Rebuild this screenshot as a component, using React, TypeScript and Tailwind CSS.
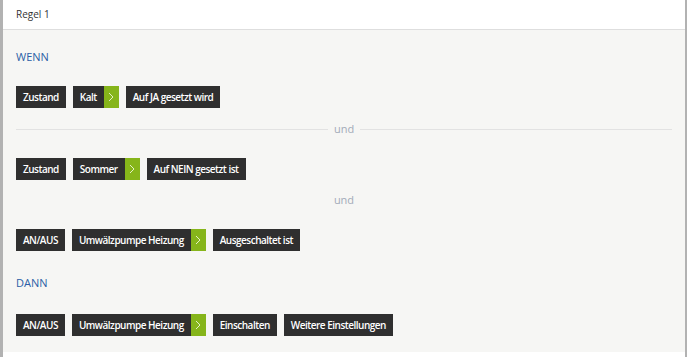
import React from 'react';

type ChipDef = { label: string; arrow?: boolean };

const rows: ChipDef[][] = [
  [{ label: 'Zustand' }, { label: 'Kalt', arrow: true }, { label: 'Auf JA gesetzt wird' }],
  [{ label: 'Zustand' }, { label: 'Sommer', arrow: true }, { label: 'Auf NEIN gesetzt ist' }],
  [{ label: 'AN/AUS' }, { label: 'Umwälzpumpe Heizung', arrow: true }, { label: 'Ausgeschaltet ist' }],
  [
    { label: 'AN/AUS' },
    { label: 'Umwälzpumpe Heizung', arrow: true },
    { label: 'Einschalten' },
    { label: 'Weitere Einstellungen' },
  ],
];

function Chip({ label, arrow }: ChipDef) {
  return (
    <div className="flex h-[22px] items-stretch bg-[#2f2f2f]">
      <span className="flex items-center px-[7px] text-[10px] font-semibold tracking-[-0.5px] text-white">
        {label}
      </span>
      {arrow && (
        <span className="flex w-[15px] items-center justify-center bg-[#86b51a]">
          <svg width="6" height="10" viewBox="0 0 6 10" fill="none">
            <path d="M1 1l4 4-4 4" stroke="#e4f0c4" strokeWidth="1" />
          </svg>
        </span>
      )}
    </div>
  );
}

function ChipRow({ chips, className = '' }: { chips: ChipDef[]; className?: string }) {
  return (
    <div className={`flex gap-[7px] ${className}`}>
      {chips.map((c, i) => (
        <Chip key={i} {...c} />
      ))}
    </div>
  );
}

export default function App() {
  return (
    <div className="h-[357px] w-[687px] bg-white font-['Open_Sans',sans-serif]">
      <div className="flex h-full flex-col border-l-[3px] border-r-2 border-[#b2b2b2]">
        {/* Header */}
        <div className="flex h-[30px] items-center border-b border-[#dedede] bg-white pl-[13px] text-[10px] text-[#333]">
          Regel 1
        </div>

        {/* Body */}
        <div className="bg-[#f6f6f4] pb-[16px] pl-[13px] pr-[13px] pt-[20px]">
          <div className="text-[11px] leading-[14px] text-[#2b5ea6]">WENN</div>
          <ChipRow chips={rows[0]} className="mt-[22px]" />

          <div className="mt-[14px] flex items-center">
            <div className="h-px flex-1 bg-[#e2e2e2]" />
            <span className="px-[6px] text-[11px] leading-[14px] text-[#a3abb9]">und</span>
            <div className="h-px flex-1 bg-[#e2e2e2]" />
          </div>

          <ChipRow chips={rows[1]} className="mt-[22px]" />

          <div className="mt-[13px] text-center text-[11px] leading-[14px] text-[#a3abb9]">und</div>

          <ChipRow chips={rows[2]} className="mt-[22px]" />

          <div className="mt-[25px] text-[11px] leading-[14px] text-[#2b5ea6]">DANN</div>
          <ChipRow chips={rows[3]} className="mt-[24px]" />
        </div>
      </div>
    </div>
  );
}
